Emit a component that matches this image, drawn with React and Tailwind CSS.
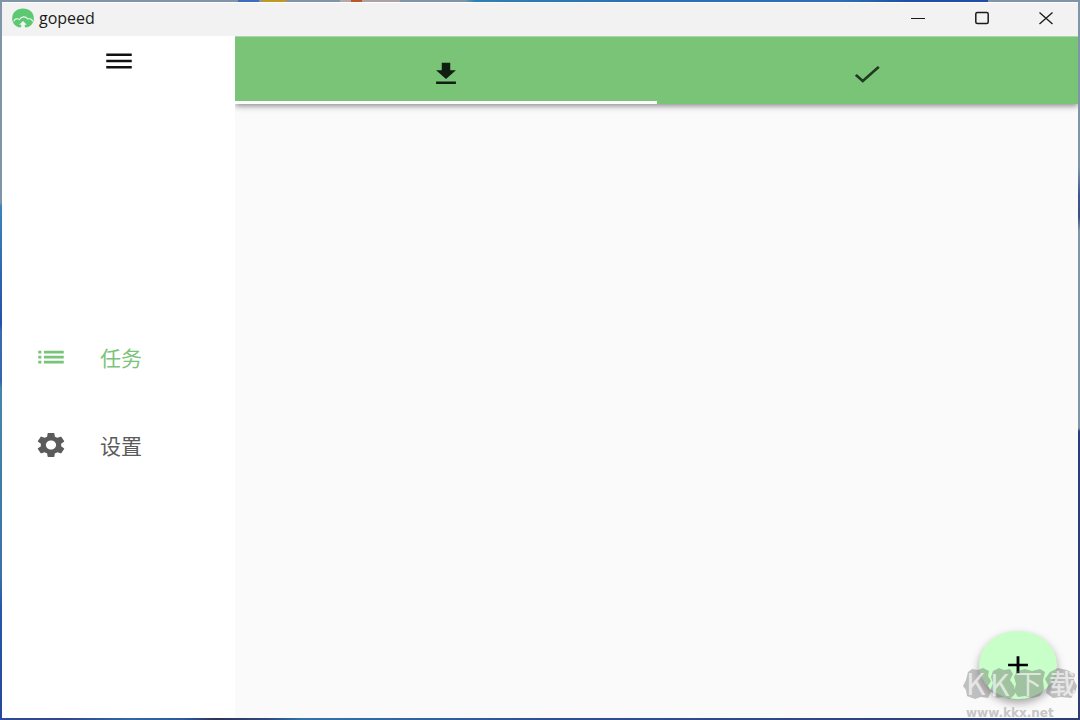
import React from 'react';

const sideItems = [
    { id: 'tasks', label: '任务', active: true },
    { id: 'settings', label: '设置', active: false },
];

// every 24-unit glyph is drawn slightly wider than tall
const Icon = ({ children, className = '' }) => (
    <svg
        viewBox="0 0 24 24"
        preserveAspectRatio="none"
        fill="currentColor"
        aria-hidden="true"
        className={`w-[34px] h-[30px] shrink-0 ${className}`}
    >
        {children}
    </svg>
);

const Logo = () => (
    <svg viewBox="0 0 22 20" className="w-[22px] h-5" aria-hidden="true">
        <path d="M.3 12.500C-.8 5 4.300.5 11 .5s11.800 4.500 10.700 12c-.7 3.300-3.200 5.600-6.200 6.700L6.500 19.200C3.500 18.100 1 15.800.3 12.500z" fill="#5dc872" />
        <path d="M1.800 13.300c.7-2.600 3.600-3.300 5.600-1.700 1.500-3.400 6.400-3.700 8.300-.6 2.300-.5 4.500.6 5 2.500" fill="none" stroke="#f3f3f3" strokeWidth="1.100" />
        <path d="M9.200 20v-3.200H7.200L11 12.900l3.800 3.900h-2V20z" fill="#f3f3f3" />
    </svg>
);

const TitleBar = () => {
    const button = 'w-16 h-full flex items-center justify-center text-[#1a1a1a]';

    return (
        <header className="h-[34px] shrink-0 flex items-center pb-[3px] bg-[#f2f2f2] border-t border-white">
            <div className="flex items-center gap-[5px] pl-2.5">
                <Logo />
                <span className="text-base leading-5 text-[#1a1a1a] font-['Open_Sans',sans-serif]">gopeed</span>
            </div>
            <div className="ml-auto flex h-full">
                <button type="button" aria-label="Minimize" className={button}>
                    <svg viewBox="0 0 14 14" className="size-3.5" stroke="currentColor"><path d="M0 7.500h14" /></svg>
                </button>
                <button type="button" aria-label="Maximize" className={button}>
                    <svg viewBox="0 0 14 14" className="size-3.5" fill="none" stroke="currentColor" strokeWidth="1.500">
                        <rect x=".8" y="1.500" width="12.400" height="11" rx="1.500" />
                    </svg>
                </button>
                <button type="button" aria-label="Close" className={button}>
                    <svg viewBox="0 0 14 14" className="size-3.5" stroke="currentColor" strokeWidth="1.300">
                        <path d="M.5 1.500l13 11.500M13.500 1.500L.5 13" />
                    </svg>
                </button>
            </div>
        </header>
    );
};

const SideBar = () => (
    <aside className="w-[233px] shrink-0 flex flex-col bg-white">
        <div className="h-[50px] flex items-center justify-center">
            <button type="button" aria-label="Menu" className="text-[#111]">
                <Icon><path d="M3 18h18v-2H3v2zm0-5h18v-2H3v2zm0-7v2h18V6H3z" /></Icon>
            </button>
        </div>
        <nav className="flex-1 flex flex-col justify-center pb-0.5">
            {sideItems.map((item) => (
                <a
                    key={item.id}
                    href={`#${item.id}`}
                    className={`h-[88px] flex items-center gap-8 pl-8 text-[21px] leading-7 font-['Noto_Sans_CJK_SC',sans-serif] ${item.active ? 'text-[#79c478]' : 'text-[#5b5b5b]'}`}
                >
                    <Icon>
                        {item.id === 'tasks' ? (
                            <path d="M3 13.200h2.200v-2.200H3v2.200zm0 4h2.200v-2.200H3v2.200zm0-8h2.200V7H3v2.200zm4 4h14v-2.200H7v2.200zm0 4h14v-2.200H7v2.200zM7 7v2.200h14V7H7z" />
                        ) : (
                            <path d="M19.140 12.940c.04-.3.06-.61.06-.94 0-.32-.02-.64-.07-.94l2.030-1.580c.18-.14.23-.41.12-.61l-1.920-3.320c-.12-.22-.37-.29-.59-.22l-2.390.96c-.5-.38-1.030-.7-1.620-.94l-.36-2.540c-.04-.24-.24-.41-.48-.41h-3.840c-.24 0-.43.17-.47.41l-.36 2.540c-.59.24-1.130.57-1.620.94l-2.390-.96c-.22-.08-.47 0-.59.22L2.740 8.870c-.12.21-.08.47.12.61l2.030 1.580c-.05.3-.09.63-.09.94s.02.64.07.94l-2.030 1.580c-.18.14-.23.41-.12.61l1.920 3.320c.12.22.37.29.59.22l2.390-.96c.5.38 1.030.7 1.620.94l.36 2.540c.05.24.24.41.48.41h3.840c.24 0 .44-.17.47-.41l.36-2.540c.59-.24 1.130-.56 1.620-.94l2.390.96c.22.08.47 0 .59-.22l1.920-3.320c.12-.22.07-.47-.12-.61l-2.010-1.580zM12 15.600c-1.980 0-3.600-1.620-3.600-3.600s1.620-3.600 3.600-3.600 3.600 1.620 3.600 3.600-1.620 3.600-3.600 3.600z" />
                        )}
                    </Icon>
                    <span>{item.label}</span>
                </a>
            ))}
        </nav>
    </aside>
);

const TabBar = () => (
    <div role="tablist" className="h-[68px] shrink-0 flex bg-[#7ac478] border-t border-[#a9d8a8] shadow-[0_2px_6px_rgba(0,0,0,0.45)]">
        <button type="button" role="tab" aria-selected="true" aria-label="Downloading" className="flex-1 flex items-center justify-center pt-2.5 border-b-3 border-white text-[#101d10]">
            <Icon><path d="M19 9h-4V3H9v6H5l7 7 7-7zM5 18v2h14v-2H5z" /></Icon>
        </button>
        <button type="button" role="tab" aria-selected="false" aria-label="Done" className="flex-1 flex items-center justify-center pt-2.5 border-b-3 border-transparent text-[#233823]">
            <Icon><path d="M9 16.170L4.830 12l-1.420 1.410L9 19 21 7l-1.410-1.410z" /></Icon>
        </button>
    </div>
);

const Watermark = () => (
    <div className="absolute right-0 bottom-0 w-[115px] h-[54px] pointer-events-none select-none">
        <svg viewBox="0 0 115 54" className="size-full overflow-visible">
            <g fill="#666" fillOpacity=".4">
                <path d="M5 8l4-3 6 1 5-2 6 3-1 5 3 5-3 5 3 6-3 6-7-1-6 2-8-3-1-6-3-4 3-6z" />
                <path d="M30 7l6-3 5 2 6-1 3 5-3 6 4 6 1 8-5 5-6-2-7 1-4-5-3-2 3-8-2-6z" />
                <path d="M54 7l8-2 7 2 8-2 5 3-2 8 1 9-4 7-8 2-7-2-7 1-4-6 2-7-2-7z" />
                <path d="M87 8l8-4 9 2 8 4-1 6 3 6-2 7-4 5-10-1-8 1-7-5 2-8-3-6z" />
            </g>
            <g fill="#fff" fillOpacity=".65" fontFamily="'Noto Sans CJK SC', sans-serif">
                <text x="3" y="31" fontSize="30">K</text>
                <text x="27" y="32" fontSize="30">K</text>
                <text x="52" y="30" fontSize="27">下</text>
                <text x="86" y="30" fontSize="27" fontWeight="500">载</text>
            </g>
            <text x="3" y="53" fontSize="12" fontWeight="700" fill="#c6c6c6" fontFamily="'DejaVu Sans', sans-serif">www.kkx.net</text>
        </svg>
    </div>
);

const App = () => {
    return (
        <div className="h-screen grid grid-cols-[2px_minmax(0,1fr)_2px] grid-rows-[2px_minmax(0,1fr)_2px]">
            {/* desktop showing around the window */}
            <div className="col-span-3 bg-[linear-gradient(90deg,#8096a8_22%,#3f6cc0_22%,#3f6cc0_24%,#8096a8_24%,#c09a20_24.500%,#c09a20_26.500%,#8096a8_26.500%,#8096a8_31.500%,#b5a9a6_31.500%,#b5a9a6_32.500%,#b8572a_32.500%,#b8572a_33.500%,#aaa3a1_33.500%,#aaa3a1_37%,#8096a8_37%,#8096a8_43%,#2d80b5_44%,#2b70b5_60%,#2c6fb5_78%,#1e4fa8_84%,#1e4fa8_91.500%,#8096a8_91.500%)]" />
            <div className="bg-[linear-gradient(180deg,#8096a8_28%,#3a86be_28.500%,#2c5fae_40%,#254fac_45%,#3a6bb2_46%,#3465b0_53%,#4586ab_54%,#3b72a5_80%,#2457ac_85%,#27479a)]" />
            <div className="min-w-0 flex flex-col">
                <TitleBar />
                <div className="relative flex-1 min-h-0 flex">
                    <SideBar />
                    <main className="relative flex-1 min-w-0 flex flex-col overflow-clip bg-[#fafafa]">
                        <TabBar />
                        <button
                            type="button"
                            aria-label="Add task"
                            className="absolute right-[21px] bottom-[19px] w-[78px] h-[68px] flex items-center justify-center rounded-[50%] bg-[#c8ffc8] text-black shadow-[0_4px_9px_rgba(0,0,0,0.35)]"
                        >
                            <Icon><path d="M19 13h-6v6h-2v-6H5v-2h6V5h2v6h6v2z" /></Icon>
                        </button>
                    </main>
                    <Watermark />
                </div>
            </div>
            <div className="bg-[linear-gradient(180deg,#8096a8_23%,#3d5690_27%,#3d4f80_30%,#8096a8_32%,#8096a8_59.500%,#2a3c7c_60%,#303c70)]" />
            <div className="col-span-3 bg-[linear-gradient(90deg,#2e4a9a,#34478c_6%,#3069a5_12%,#2f5a9d_17%,#2f3354_20%,#2f4a80_25%,#3274a8_28%,#2f5096_50%,#2e3c70)]" />
        </div>
    )
}

export default App;
